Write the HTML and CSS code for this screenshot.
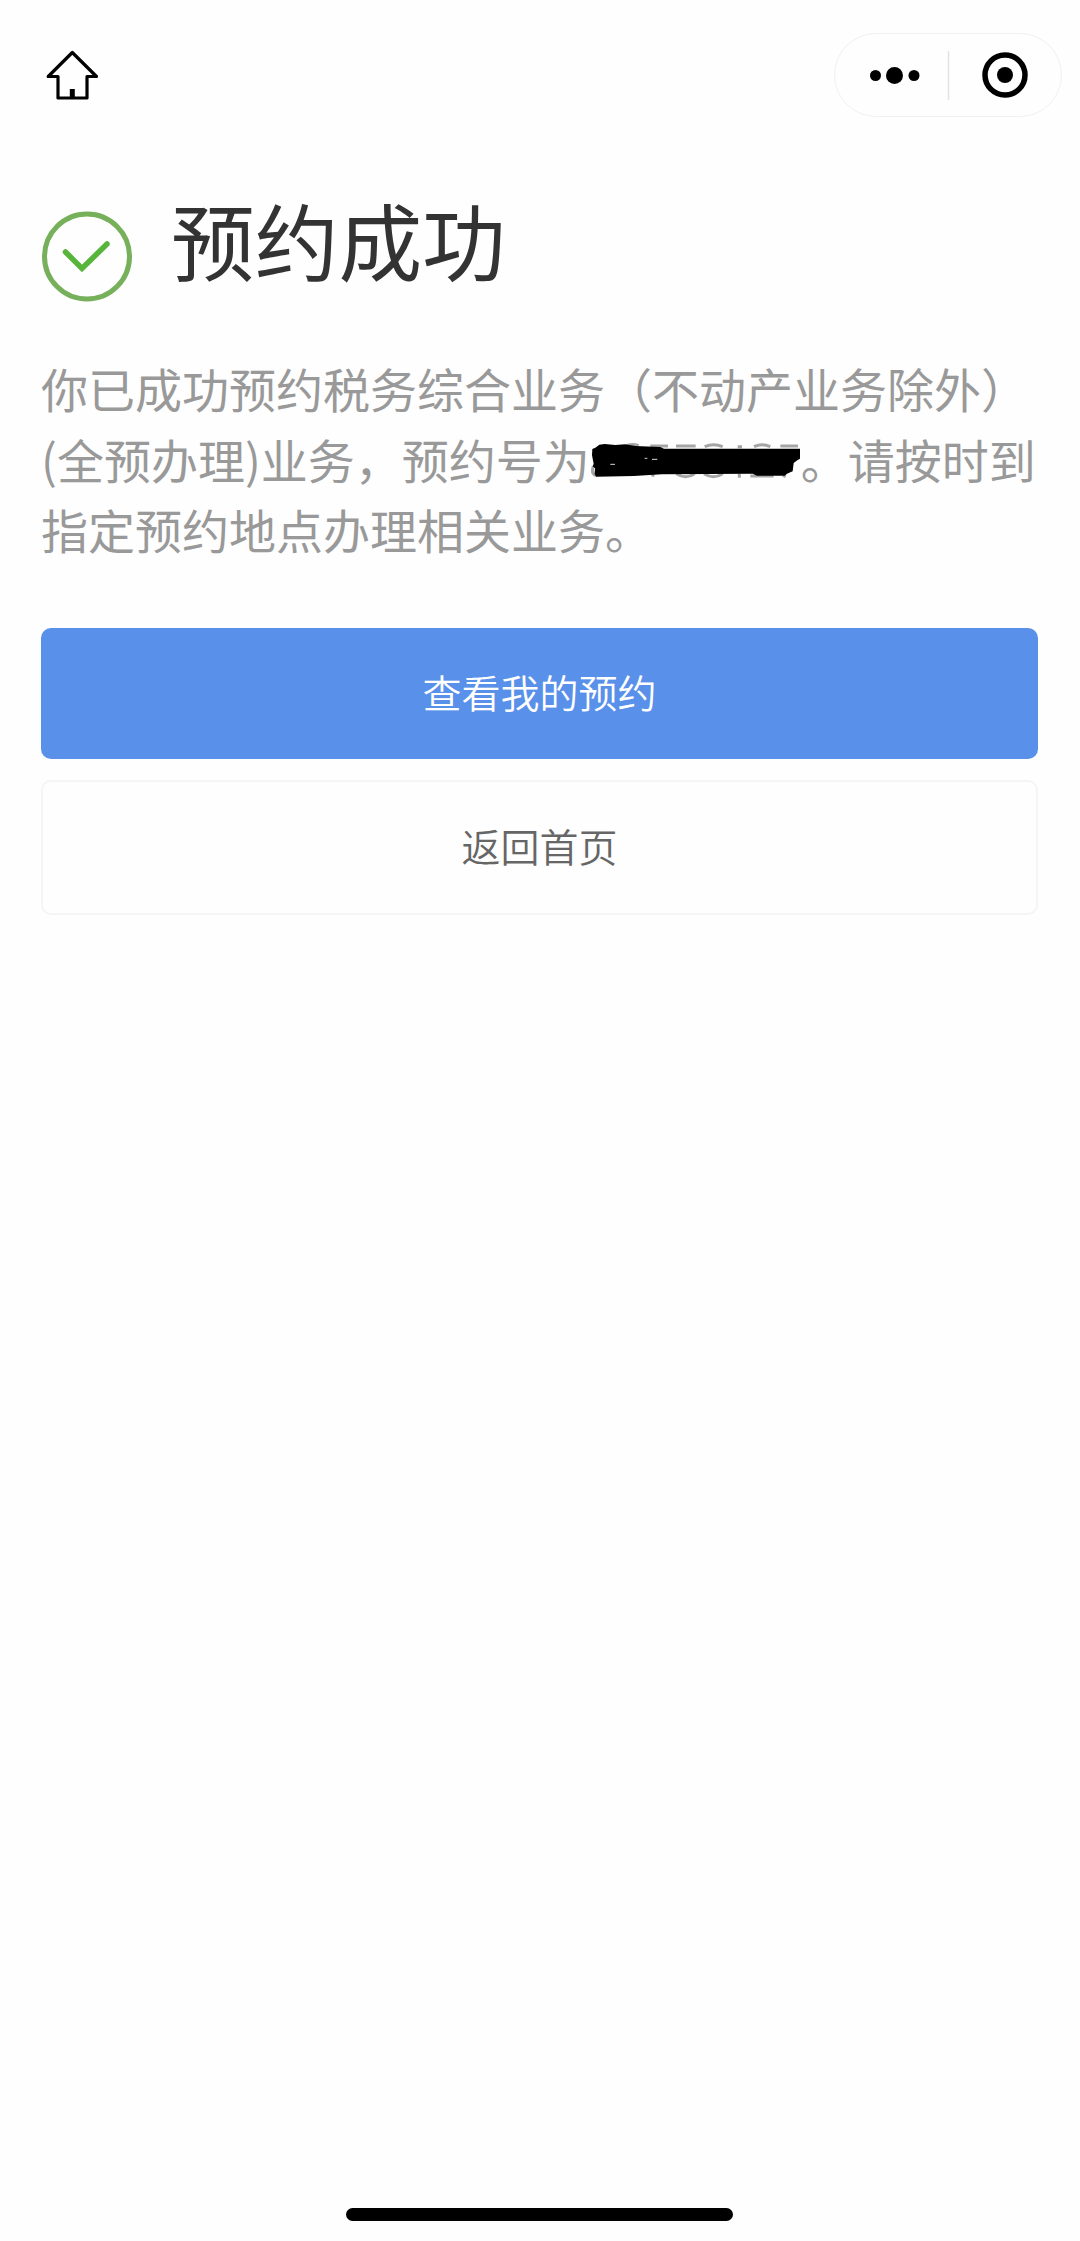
FILE: index.html
```html
<!DOCTYPE html>
<html lang="zh-CN">
<head>
    <meta charset="UTF-8">
    <title>预约成功</title>
    <link rel="stylesheet" href="styles.css">
</head>
<body>
    <header class="navbar">
        <svg class="home" width="54" height="54" viewBox="0 0 54 54">
            <path d="M27.300 4.500 3.200 28.500H13V50H42V28.500H51.500Z" fill="none" stroke="#000" stroke-width="3.200" stroke-linejoin="round"/>
            <path d="M27.300 41V50" stroke="#000" stroke-width="5"/>
        </svg>
        <div class="capsule">
            <svg width="226" height="82" viewBox="0 0 226 82">
                <circle cx="40.500" cy="41.500" r="5.500"/>
                <circle cx="59.500" cy="41.500" r="8.500"/>
                <circle cx="79" cy="41.500" r="5.500"/>
                <path d="M113.500 17V66" stroke="#e2e2e2" stroke-width="1.500"/>
                <circle cx="170" cy="41" r="20" fill="none" stroke="#000" stroke-width="5.500"/>
                <circle cx="170" cy="41" r="8"/>
            </svg>
        </div>
    </header>

    <main class="container">
        <div class="result">
            <svg class="success" width="92" height="92" viewBox="0 0 92 92">
                <circle cx="46" cy="46.500" r="42.500" fill="none" stroke="#76b05a" stroke-width="5"/>
                <path d="M24.500 42 41 58.500 66 34" fill="none" stroke="#57b53c" stroke-width="5.500" stroke-linecap="round"/>
            </svg>
            <h1>预约成功</h1>
        </div>

        <p class="message">
            你已成功预约税务综合业务（不动产业务除外）<br>
            (全预办理)业务，预约号为<svg class="mask" width="208" height="36" viewBox="0 0 624 108">
                <path d="M105 7Q123 2 140 8M175 9H228M252 9H311M338 11Q365 0 392 11M437 11H450M486 11Q510 0 535 11M565 9H618" fill="none" stroke="#a5a5a5" stroke-width="9"/>
                <path d="M4 70Q-4 92 12 98M185 92 181 101M253 92Q281 110 308 92M336 92Q365 110 392 92M442 92V104M475 99H545M579 95 575 103" fill="none" stroke="#a5a5a5" stroke-width="9"/>
                <path d="M1 18 10 14 22 5 38 3 70 6 100 4 130 9 205 12 216 17H624V47L616 52 605 60 602 85 585 92 578 98H495L482 92 210 94 125 99 12 101 8 92 9 76 2 70 5 62 0 37Z"/>
                <path d="M55 64H69M158 46H166M180 49H196" stroke="#fff" stroke-width="2.500"/>
            </svg>。请按时到<br>
            指定预约地点办理相关业务。
        </p>

        <div class="actions">
            <button type="button" class="button primary">查看我的预约</button>
            <button type="button" class="button">返回首页</button>
        </div>
    </main>

    <div class="home-bar"></div>
</body>
</html>
```
FILE: styles.css
```css
* {
    box-sizing: border-box;
}
body {
    display: flex;
    flex-direction: column;
    min-height: 2241px;
    margin: 0;
    background: #fefefe;
    font-family: "Noto Sans CJK SC", sans-serif;
}
.navbar {
    display: flex;
    justify-content: space-between;
    padding: 33px 18px 0 45px;
    height: 204px;
}
.home {
    margin-top: 15px;
}
.capsule {
    width: 228px;
    height: 84px;
    border: 1px solid #f0f0f0;
    border-radius: 42px;
}
.capsule svg {
    display: block;
}
.container {
    padding: 0 42px 0 41px;
}
.result {
    display: flex;
    height: 149px;
}
.success {
    margin-top: 6px;
}
h1 {
    margin: -25px 0 0 38px;
    color: #333;
    font-size: 83.7px;
    font-weight: 400;
    line-height: 120px;
}
.message {
    margin: 0;
    color: #999;
    font-size: 47px;
    font-weight: 400;
    line-height: 70.5px;
    white-space: nowrap;
}
.mask {
    margin: 0 1px 0 2px;
    overflow: visible;
}
.actions {
    display: flex;
    flex-direction: column;
    gap: 21px;
    margin-top: 63px;
}
.button {
    height: 135px;
    padding: 0 0 5px;
    border: 2px solid #f4f5f5;
    border-radius: 10px;
    background: #fefefe;
    color: #666;
    font-family: inherit;
    font-size: 39px;
    font-weight: 350;
}
.primary {
    height: 131px;
    border: 0;
    background: #5990ea;
    color: #fff;
}
.home-bar {
    width: 387px;
    height: 13px;
    margin: auto auto 20px 346px;
    border-radius: 7px;
    background: #000;
}
```
